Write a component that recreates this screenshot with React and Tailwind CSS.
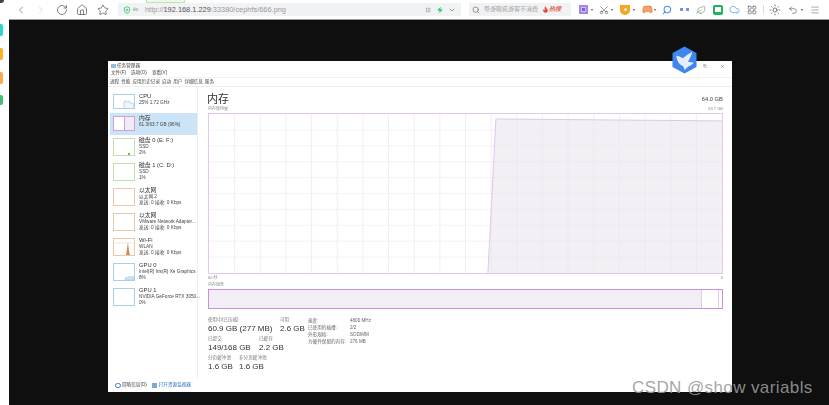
import { ChevronLeft, ChevronRight, RotateCw, Home, Star, Search, ChevronDown, Flame, Scissors, Gamepad2, Cloud, LayoutGrid, Sun, Undo2, Menu, ShieldPlus, Zap, X, Copy, Leaf, Grip } from 'lucide-react';

const CJK = 'font-["Liberation_Sans","Noto_Sans_CJK_SC",sans-serif]';

const rows = [
  { name: 'CPU', sub: '25%  1.72 GHz', color: 'border-[#a9d0ea]', h: 'h-[22px]', thumb: 'h-[15px]', chart: 'cpu' },
  { name: '内存', sub: '61.3/63.7 GB (96%)', color: 'border-[#cf9fe0]', h: 'h-[22px]', thumb: 'h-[15px]', chart: 'mem', active: true },
  { name: '磁盘 0 (E: F:)', sub: 'SSD', sub2: '2%', color: 'border-[#c2e0ac]', chart: 'disk' },
  { name: '磁盘 1 (C: D:)', sub: 'SSD', sub2: '1%', color: 'border-[#c2e0ac]' },
  { name: '以太网', sub: '以太网 2', sub2: '发送: 0 接收: 0 Kbps', color: 'border-[#ecc8a8]' },
  { name: '以太网', sub: 'VMware Network Adapter...', sub2: '发送: 0 接收: 0 Kbps', color: 'border-[#ecc8a8]' },
  { name: 'Wi-Fi', sub: 'WLAN', sub2: '发送: 0 接收: 0 Kbps', color: 'border-[#ecc8a8]', chart: 'wifi' },
  { name: 'GPU 0', sub: 'Intel(R) Iris(R) Xe Graphics', sub2: '8%', color: 'border-[#a9d0ea]', chart: 'gpu' },
  { name: 'GPU 1', sub: 'NVIDIA GeForce RTX 3050...', sub2: '0%', color: 'border-[#a9d0ea]' },
];

function Thumb({ row }) {
  return (
    <div className={`relative w-[22px] mt-[3px] shrink-0 border bg-white ${row.color} ${row.thumb || 'h-[18px]'}`}>
      {row.chart === 'cpu' && (
        <svg className="absolute inset-0 w-full h-full" viewBox="0 0 20 13">
          <path d="M10 13V8L11 5.5 13 7 15 6 16 8 20 9V13" fill="#eef6fb" stroke="#8fc0e0" strokeWidth="0.6" />
        </svg>
      )}
      {row.chart === 'mem' && <div className="absolute right-0 top-0 bottom-0 w-[10px] bg-[#f1ecf4] border-l border-[#cf9fe0]"></div>}
      {row.chart === 'disk' && <div className="absolute right-[4px] bottom-0 w-[2px] h-[2px] bg-[#7cb35a]"></div>}
      {row.chart === 'wifi' && (
        <svg className="absolute inset-0 w-full h-full" viewBox="0 0 20 16">
          <path d="M0 4H20" stroke="#f0d8c4" strokeWidth="0.6" />
          <path d="M12 16 14 3 15 12 16 16Z" fill="#d98a4e" />
        </svg>
      )}
      {row.chart === 'gpu' && (
        <svg className="absolute inset-0 w-full h-full" viewBox="0 0 20 16">
          <path d="M11 16 12 13 14 14 15 12 17 14 18 12 20 13V16Z" fill="#d0e4f2" stroke="#8fc0e0" strokeWidth="0.5" />
        </svg>
      )}
    </div>
  );
}

function SideRow({ row }) {
  return (
    <div className={`flex items-start gap-[4px] pl-[3px] ${row.h || 'h-[25px]'} ${row.active ? 'bg-[#cce4f7]' : ''}`}>
      <Thumb row={row} />
      <div className="min-w-0 pt-[2px] leading-none text-[#444]">
        <div className="text-[5.8px] leading-[6.5px] whitespace-nowrap text-[#333]">{row.name}</div>
        <div className="text-[4.7px] leading-[6px] whitespace-nowrap">{row.sub}</div>
        {row.sub2 && <div className="text-[4.7px] leading-[6px] whitespace-nowrap">{row.sub2}</div>}
      </div>
    </div>
  );
}

function Stat({ label, value, w }) {
  return (
    <div className={w}>
      <div className="text-[4.6px] leading-[6px] text-[#777] whitespace-nowrap">{label}</div>
      <div className="text-[8px] leading-[12px] text-[#333] whitespace-nowrap">{value}</div>
    </div>
  );
}

function Caret({ ml }) {
  return <div className={`${ml} w-0 h-0 border-x-[1.5px] border-t-[2px] border-x-transparent border-t-[#555]`}></div>;
}

function MemChart() {
  const cols = Array.from({ length: 19 }, (_, i) => (i + 1) * 25.75);
  const lines = Array.from({ length: 9 }, (_, i) => (i + 1) * 16.1);
  return (
    <svg className="block w-[515px] h-[161px] border border-[#e2c8ea]" viewBox="0 0 515 161" preserveAspectRatio="none">
      <path d="M280 161 288 5 400 6 515 7V161Z" fill="#f2eff5" />
      {cols.map((x) => <path key={x} d={`M${x} 0V161`} stroke="#ebe6ef" strokeOpacity="0.7" strokeWidth="1" />)}
      {lines.map((y) => <path key={y} d={`M0 ${y}H515`} stroke="#ebe6ef" strokeOpacity="0.5" strokeWidth="1" />)}
      <path d="M280 161 288 5 400 6 515 7" fill="none" stroke="#e2c4ea" strokeWidth="1" />
    </svg>
  );
}

function TaskManager() {
  return (
    <div className={`w-[624px] h-[331px] bg-white flex flex-col text-[#444] blur-[0.3px] ${CJK}`}>
      <div className="h-[9px] shrink-0 flex items-center pl-[3px] pr-[7px] pt-[1px]">
        <div className="w-[5px] h-[4px] bg-[#8fc0e0] mr-[1px]"></div>
        <span className="text-[4.6px] leading-none">任务管理器</span>
        <Copy className="ml-auto w-[4px] h-[4px] mr-[13px] text-[#666]" />
        <X className="w-[5px] h-[5px] text-[#555]" />
      </div>
      <div className="h-[8px] shrink-0 flex items-center gap-[5px] pl-[3px] text-[4.6px] border-b border-[#f3f3f3]">
        <span>文件(F)</span><span>选项(O)</span><span>查看(V)</span>
      </div>
      <div className="h-[9px] shrink-0 flex items-center gap-[2px] pl-[2px] text-[4.6px] border-b border-[#eeeeee]">
        <span>进程</span><span>性能</span><span>应用历史记录</span><span>启动</span><span>用户</span><span>详细信息</span><span>服务</span>
      </div>
      <div className="flex-1 flex min-h-0">
        <div className="w-[90px] shrink-0 pt-[4px] pl-[2px] border-r border-[#eeeeee]">
          {rows.map((row, i) => <SideRow key={i} row={row} />)}
        </div>
        <div className="flex-1 min-w-0 pl-[9px] pr-[9px]">
          <div className="flex items-center justify-between h-[13px] mt-[6px]">
            <span className="text-[11px] leading-none text-[#333]">内存</span>
            <span className="text-[5.8px] leading-none text-[#444]">64.0 GB</span>
          </div>
          <div className="flex justify-between h-[6px] pl-[1px] text-[4px] leading-[6px] text-[#888]">
            <span>内存使用量</span><span>63.7 GB</span>
          </div>
          <div className="mt-[1px] ml-[1px]"><MemChart /></div>
          <div className="flex justify-between ml-[1px] h-[6px] mt-[1px] text-[4px] leading-[6px] text-[#888]">
            <span>60 秒</span><span>0</span>
          </div>
          <div className="ml-[1px] h-[6px] mt-[1px] text-[4px] leading-[6px] text-[#888]">内存组合</div>
          <div className="ml-[1px] mt-[1px] w-[515px] h-[20px] border border-[#c98fdc] flex">
            <div className="w-[493px] bg-[#f1eff4] border-r border-[#e2c8ea]"></div>
            <div className="flex-1 border-r border-[#e2c8ea] mr-[3px]"></div>
          </div>
          <div className="flex ml-[1px] mt-[8px]">
            <div className="w-[100px]">
              <div className="flex">
                <Stat w="w-[72px]" label="使用中(已压缩)" value="60.9 GB (277 MB)" />
                <Stat label="可用" value="2.6 GB" />
              </div>
              <div className="flex mt-[1px]">
                <Stat w="w-[51px]" label="已提交" value="149/168 GB" />
                <Stat label="已缓存" value="2.2 GB" />
              </div>
              <div className="flex mt-[1px]">
                <Stat w="w-[31px]" label="分页缓冲池" value="1.6 GB" />
                <Stat label="非分页缓冲池" value="1.6 GB" />
              </div>
            </div>
            <div className="grid grid-cols-[42px_auto] auto-rows-[7px] text-[4.6px] leading-[7px] text-[#666] whitespace-nowrap">
              <span>速度:</span><span>4800 MHz</span>
              <span>已使用的插槽:</span><span>2/2</span>
              <span>外形规格:</span><span>SODIMM</span>
              <span>为硬件保留的内存:</span><span>276 MB</span>
            </div>
          </div>
        </div>
      </div>
      <div className="h-[14px] shrink-0 flex items-center pl-[7px] pt-[1px] text-[4.6px]">
        <span className="w-[6px] h-[5px] rounded-full border border-[#3a78c8] mr-[1px]"></span>
        <span className="mr-[5px]">简略信息(D)</span>
        <span className="w-[5px] h-[5px] bg-[#7fa8d8] mr-[2px]"></span>
        <span className="text-[#2a6fc4]">打开资源监视器</span>
      </div>
    </div>
  );
}

function Toolbar() {
  return (
    <div className={`h-[20px] shrink-0 bg-white border-b border-[#9a9a9a] flex items-center ${CJK}`}>
      <ChevronLeft className="w-[12px] h-[12px] ml-[6px] text-[#777]" strokeWidth={1.5} />
      <ChevronRight className="w-[12px] h-[12px] ml-[8px] text-[#ccc]" strokeWidth={1.5} />
      <RotateCw className="w-[12px] h-[12px] ml-[9px] text-[#555]" strokeWidth={1.5} />
      <Home className="w-[12px] h-[12px] ml-[8px] text-[#555]" strokeWidth={1.5} />
      <Star className="w-[12px] h-[12px] ml-[9px] text-[#555]" strokeWidth={1.5} />
      <div className="ml-[9px] w-[343px] h-[13px] bg-[#f1f2f4] flex items-center pl-[5px] pr-[5px]">
        <ShieldPlus className="w-[8px] h-[8px] text-[#2fc46a]" strokeWidth={2.5} />
        <span className="ml-[2px] text-[5px] text-[#888] w-[10px]">ēx</span>
        <span className="ml-[2px] text-[7.4px] text-[#999] whitespace-nowrap">
          http://<span className="text-[#555]">192.168.1.229</span>:33380/cephfs/666.png
        </span>
        <Grip className="ml-auto w-[6px] h-[6px] text-[#999]" />
        <Zap className="ml-[6px] w-[6px] h-[6px] text-[#2ecc71] fill-[#2ecc71]" />
        <ChevronDown className="ml-[5px] w-[8px] h-[8px] text-[#777]" />
      </div>
      <div className="ml-[8px] w-[102px] h-[13px] bg-[#f1f2f4] flex items-center pl-[3px]">
        <Search className="w-[8px] h-[8px] text-[#666]" />
        <span className="ml-[4px] text-[6px] text-[#a5a5a5] whitespace-nowrap">导游曝疯游客不消费</span>
        <Flame className="ml-[4px] w-[7px] h-[7px] text-[#e8453c] fill-[#e8453c]" />
        <span className="text-[6px] font-bold italic text-[#e8604c] whitespace-nowrap">热搜</span>
      </div>
      <div className="ml-[7.5px] w-[9px] h-[9px] bg-[#a184ec] flex items-center justify-center">
        <div className="w-[5px] h-[5px] bg-[#7e5de0] border border-[#d0c2f6]"></div>
      </div>
      <Caret ml="ml-[3px]" />
      <Scissors className="ml-[6.5px] w-[10px] h-[10px] text-[#555] -rotate-90" strokeWidth={1.5} />
      <Caret ml="ml-[2px]" />
      <div className="ml-[7px] w-[10px] h-[10px] rounded-t-[2px] rounded-b-full bg-[#f5a623] flex items-center justify-center">
        <div className="w-[3px] h-[3px] rounded-full bg-[#fff3d6]"></div>
      </div>
      <Caret ml="ml-[2.5px]" />
      <Gamepad2 className="ml-[7px] w-[11px] h-[11px] text-[#f07a3a] fill-[#f5a06e]" strokeWidth={2} />
      <Caret ml="ml-[1.5px]" />
      <Search className="ml-[6px] w-[10px] h-[10px] text-[#3a8ee8] -scale-x-100" strokeWidth={2.5} />
      <div className="ml-[7.5px] w-[9px] flex gap-[3px]">
        <span className="w-[3px] h-[3px] bg-[#7a8ff2]"></span>
        <span className="w-[3px] h-[3px] bg-[#7a8ff2]"></span>
      </div>
      <Leaf className="ml-[7.5px] w-[10px] h-[10px] text-[#6a9a6a]" strokeWidth={1.5} />
      <div className="ml-[7px] w-[10px] h-[10px] rounded-[2px] bg-[#22b35e] flex items-center justify-center">
        <div className="w-[6px] h-[5px] bg-white"></div>
      </div>
      <Cloud className="ml-[5.5px] w-[11px] h-[11px] text-[#3aa0d8]" strokeWidth={1.5} />
      <LayoutGrid className="ml-[7.5px] w-[10px] h-[10px] text-[#555]" strokeWidth={1.5} />
      <div className="ml-[6px] w-px h-[9px] bg-[#ddd]"></div>
      <Sun className="ml-[5px] w-[12px] h-[12px] text-[#555]" strokeWidth={1.5} />
      <Undo2 className="ml-[7px] w-[10px] h-[10px] text-[#555]" strokeWidth={1.5} />
      <Caret ml="ml-[2.5px]" />
      <Menu className="ml-[7.5px] w-[10px] h-[10px] text-[#777]" strokeWidth={1.5} />
    </div>
  );
}

export default function App() {
  return (
    <div className="relative w-[829px] h-[405px] overflow-hidden flex bg-white">
      <div className="w-[9px] shrink-0 bg-white flex flex-col">
        <div className="w-[4px] h-[3px] bg-[#444] rounded-br-full"></div>
        <div className="w-[3px] h-[12px] mt-[21px] bg-[#2dd4d4] rounded-r-[2px]"></div>
        <div className="w-[3px] h-[12px] mt-[12px] bg-[#ffb020] rounded-r-[2px]"></div>
        <div className="w-[3px] h-[12px] mt-[12px] bg-[#ffa94d] rounded-r-[2px]"></div>
        <div className="w-[3px] h-[10px] mt-[11px] bg-[#3cc07a] rounded-r-[2px]"></div>
      </div>
      <div className="flex-1 min-w-0 flex flex-col">
        <Toolbar />
        <div className="flex-1 bg-[#0f0f0f] pl-[99px] pt-[41px]">
          <TaskManager />
        </div>
      </div>

      <div className="absolute left-[146px] top-0 w-[39px] h-[3px] bg-[#eef8ea] border-x border-b border-[#bfe3b4]"></div>

      <svg className="absolute left-[672px] top-[46px] w-[25px] h-[28px]" viewBox="0 0 25 28">
        <path d="M12.5 0.5 24.5 7V21L12.5 27.5 0.5 21V7Z" fill="#3f86f0" />
        <path d="M4.3 9.7C7 10 9 11 11 12.3 13.5 10 17 7.5 20.3 5.7 19.5 9 18 12.5 16 15.7L21.7 16.7C20 18.5 18 20 16 20.7L12.7 24 11 20C9 19.5 8 18.5 7 17.3 5.5 15 4.5 12.5 4.3 9.7Z" fill="#e6eefb" />
      </svg>

      <div className="absolute left-[632px] top-[378px] font-['Liberation_Sans',sans-serif] text-[17px] leading-[20px] tracking-[0.4px] text-[#9a9a9a]/90 whitespace-nowrap">
        CSDN @show variabls
      </div>
    </div>
  );
}
